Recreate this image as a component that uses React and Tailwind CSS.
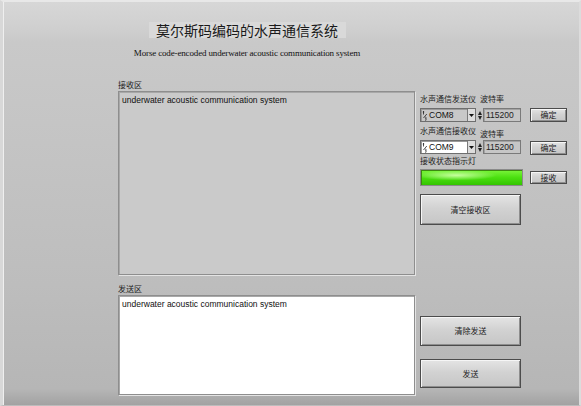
import React from "react";

const cjk = "font-['Noto_Sans_CJK_SC','Noto_Sans',sans-serif]";

const Label = ({ children, className = "" }) => (
  <div className={`${cjk} text-[8px] leading-[10px] text-[#1e1e1e] ${className}`}>{children}</div>
);

const Button = ({ className, children }) => (
  <div
    className={`${className} ${cjk} flex items-center justify-center text-[8px] text-[#222] border border-[#4c4c4c] bg-[linear-gradient(to_bottom,#e4e4e4,#d2d2d2_45%,#c6c6c6)] shadow-[inset_1px_1px_0_#f6f6f6,inset_-1px_-1px_0_#8e8e8e]`}
  >
    {children}
  </div>
);

const VisaIcon = () => (
  <svg width="6" height="11" viewBox="0 0 6 11" className="shrink-0">
    <path d="M1.5 1 V4.5 M0.8 2 H2.2 M4.8 4 L1.5 8 M3.2 7 Q5.2 7.5 3.6 9 Q5.4 9.6 3 10.4" stroke="#222" strokeWidth="0.8" fill="none" />
  </svg>
);

const Combo = ({ value, white }) => (
  <div
    className={`w-[56px] h-[14px] flex items-center border border-[#6e6e6e] shadow-[inset_1px_1px_0_#9a9a9a] ${
      white ? "bg-white" : "bg-[#c8c8c8]"
    }`}
  >
    <div className="pl-[1px]">
      <VisaIcon />
    </div>
    <div className="flex-1 pl-[1px] font-['Liberation_Sans',sans-serif] text-[8.5px] leading-[12px] text-[#111]">{value}</div>
    <div className="w-[8px] h-full flex items-center justify-center bg-[#dcdcdc] border-l border-[#7a7a7a]">
      <svg width="5" height="3" viewBox="0 0 5 3">
        <path d="M0 0 H5 L2.5 3 Z" fill="#111" />
      </svg>
    </div>
  </div>
);

const Spinner = () => (
  <div className="w-[4px] h-[14px] flex flex-col justify-center gap-[1px]">
    <svg width="4" height="4" viewBox="0 0 4 4">
      <path d="M0 4 L2 0 L4 4 Z" fill="#222" />
    </svg>
    <svg width="4" height="4" viewBox="0 0 4 4">
      <path d="M0 0 L2 4 L4 0 Z" fill="#222" />
    </svg>
  </div>
);

const Baud = () => (
  <div className="w-[38px] h-[14px] border border-[#7a7a7a] bg-[#c6c6c6] shadow-[inset_1px_1px_0_#a2a2a2] pl-[2px] font-['Liberation_Sans',sans-serif] text-[8.5px] leading-[12px] text-[#222]">
    115200
  </div>
);

const textBox = "font-['Liberation_Sans',sans-serif] text-[8.5px] leading-[10px] text-[#111] pl-[3px] pt-[3px] border border-[#8e8e8e] shadow-[inset_1px_1px_0_#a8a8a8,1px_1px_0_#e4e4e4]";

export default function App() {
  return (
    <div className="w-[581px] h-[406px] overflow-hidden flex flex-col border-t-[2px] border-t-[#e8e8e8] border-l-[3px] border-l-[#d8d8d8] border-r-[2px] border-r-[#dcdcdc] border-b border-b-[#bcbcbc] bg-[linear-gradient(to_bottom,#d7d7d7,#d0d0d0_6%,#c9c9c9_10%,#c5c5c5_30%,#bdbdbd_70%,#b6b6b6_96%,#a2a2a2)]">
      <div className="flex-1 flex flex-col border-l border-l-[#efefef]">
        {/* header */}
        <div className="w-[486px]">
          <div className={`mt-[20px] mx-auto w-[197px] h-[16px] bg-[#d9d9d9] flex items-center justify-center ${cjk} text-[14px] leading-[16px] text-[#1a1a1a]`}>
            莫尔斯码编码的水声通信系统
          </div>
          <div className="mt-[8px] h-[14px] text-center font-['Liberation_Serif',serif] text-[9px] leading-[14px] tracking-[-0.15px] text-[#111]">
            Morse code-encoded underwater acoustic communication system
          </div>
        </div>

        {/* body */}
        <div className="mt-[20px] ml-[114px] flex gap-[5px]">
          <div className="w-[297px] flex flex-col">
            <Label className="h-[11px]">接收区</Label>
            <div className={`h-[184px] bg-[#cacaca] ${textBox}`}>underwater acoustic communication system</div>
            <Label className="mt-[9px] h-[11px]">发送区</Label>
            <div className={`h-[100px] bg-white ${textBox}`}>underwater acoustic communication system</div>
          </div>

          <div className="w-[150px] flex flex-col">
            <div className="mt-[14px] flex items-end h-[10px]">
              <Label className="w-[60px]">水声通信发送仪</Label>
              <Label>波特率</Label>
            </div>
            <div className="mt-[4px] flex items-center">
              <Combo value="COM8" />
              <div className="ml-[2px]">
                <Spinner />
              </div>
              <div className="ml-[1px]">
                <Baud />
              </div>
              <Button className="ml-[9px] w-[37px] h-[14px]">确定</Button>
            </div>
            <div className="mt-[4px] flex items-start h-[13px]">
              <Label className="w-[60px]">水声通信接收仪</Label>
              <Label className="mt-[3px]">波特率</Label>
            </div>
            <div className="mt-[1px] flex items-start">
              <Combo value="COM9" white />
              <div className="ml-[2px]">
                <Spinner />
              </div>
              <div className="ml-[1px]">
                <Baud />
              </div>
              <Button className="ml-[9px] mt-[1px] w-[37px] h-[14px]">确定</Button>
            </div>
            <Label className="mt-[1px] h-[10px]">接收状态指示灯</Label>
            <div className="mt-[3px] flex items-center">
              <div className="w-[103px] h-[17px] border border-[#8a8a8a] shadow-[inset_1px_1px_0_#3c8a10] bg-[radial-gradient(ellipse_40%_35%_at_35%_35%,#c6ff9e,transparent),linear-gradient(to_bottom,#7cf53c,#4be010_50%,#33c400)]"></div>
              <Button className="ml-[7px] w-[37px] h-[13px]">接收</Button>
            </div>
            <Button className="mt-[8px] w-[101px] h-[31px]">清空接收区</Button>
            <Button className="mt-[91px] w-[101px] h-[30px]">清除发送</Button>
            <Button className="mt-[13px] w-[101px] h-[29px]">发送</Button>
          </div>
        </div>
      </div>
    </div>
  );
}
